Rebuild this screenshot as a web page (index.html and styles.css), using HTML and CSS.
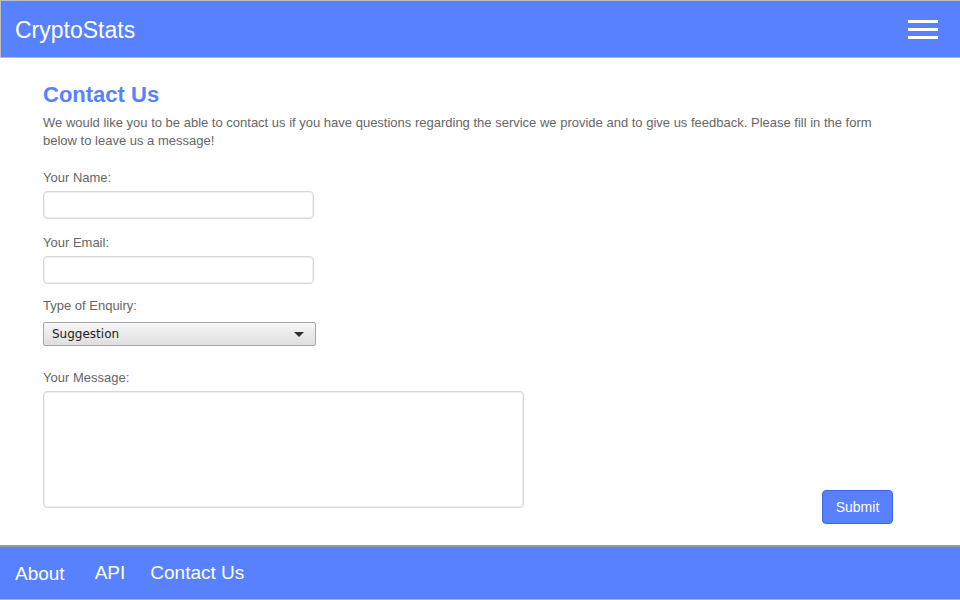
FILE: index.html
```html
<!DOCTYPE html>
<html lang="en">
<head>
<meta charset="utf-8">
<title>CryptoStats - Contact Us</title>
<link rel="stylesheet" href="styles.css">
</head>
<body>
<header class="topbar">
  <div class="brand">CryptoStats</div>
  <button class="menu" aria-label="Menu">
    <span class="bar"></span><span class="bar"></span><span class="bar"></span>
  </button>
</header>
<main class="content">
  <h1 class="title">Contact Us</h1>
  <p class="intro">We would like you to be able to contact us if you have questions regarding the service we provide and to give us feedback. Please fill in the form below to leave us a message!</p>
  <form class="form">
    <label class="label label-name">Your Name:</label>
    <input class="field" type="text">
    <label class="label label-email">Your Email:</label>
    <input class="field" type="email">
    <label class="label label-type">Type of Enquiry:</label>
    <div class="select-wrap">
      <select class="select">
        <option>Suggestion</option>
        <option>Question</option>
        <option>Bug Report</option>
      </select>
    </div>
    <div class="message-row">
      <div class="message-group">
        <label class="label label-msg">Your Message:</label>
        <textarea class="area"></textarea>
      </div>
      <button class="submit" type="button">Submit</button>
    </div>
  </form>
</main>
<footer class="footer">
  <a class="flink flink-about" href="#">About</a>
  <a class="flink flink-api" href="#">API</a>
  <a class="flink flink-contact" href="#">Contact Us</a>
</footer>
</body>
</html>
```
FILE: styles.css
```css
html, body {
  margin: 0;
  padding: 0;
  width: 960px;
  height: 600px;
  overflow: hidden;
  background: #fff;
  font-family: "Liberation Sans", Arial, sans-serif;
}

.topbar {
  box-sizing: border-box;
  height: 58px;
  background: #5781fe;
  border-top: 1px solid #bdbdbd;
  border-left: 1px solid #bdbdbd;
  border-bottom: 1px solid #bdbdbd;
  display: flex;
  align-items: center;
  justify-content: space-between;
  padding: 0 22px 0 14px;
}

.brand {
  color: #fff;
  font-size: 23px;
  line-height: 26px;
  margin-top: 2px;
}

.menu {
  background: none;
  border: 0;
  padding: 0;
  width: 30px;
  display: flex;
  flex-direction: column;
  gap: 5px;
  margin-top: 1px;
}

.bar {
  display: block;
  width: 30px;
  height: 3px;
  background: #fff;
}

.content {
  box-sizing: border-box;
  height: 487px;
  padding: 24px 67px 0 43px;
}

.title {
  margin: 0;
  color: #5781fe;
  font-size: 22px;
  line-height: 25px;
  font-weight: bold;
}

.intro {
  margin: 7px 0 0;
  color: #666;
  font-size: 13px;
  line-height: 18px;
}

.form {
  display: flex;
  flex-direction: column;
  align-items: flex-start;
}

.label {
  display: block;
  color: #666;
  font-size: 13px;
  line-height: 15px;
}

.label-name { margin-top: 20px; margin-bottom: 6px; }
.label-email { margin-top: 16px; margin-bottom: 6px; }
.label-type { margin-top: 14px; margin-bottom: 9px; }
.label-msg { margin-top: 24px; margin-bottom: 6px; }

.field {
  box-sizing: border-box;
  width: 271px;
  height: 28px;
  margin: 0;
  border: 1px solid #d8d8d8;
  box-shadow: inset 0 0 0 1px #efefef;
  border-radius: 4px;
  background: #fff;
  outline: none;
}

.select-wrap {
  position: relative;
  width: 273px;
  height: 24px;
}

.select-wrap::after {
  content: "";
  position: absolute;
  right: 12px;
  top: 10px;
  width: 0;
  height: 0;
  border-left: 5px solid transparent;
  border-right: 5px solid transparent;
  border-top: 5px solid #2e2e2e;
  pointer-events: none;
}

.select {
  -webkit-appearance: none;
  appearance: none;
  box-sizing: border-box;
  width: 273px;
  height: 24px;
  margin: 0;
  padding: 0 0 0 8px;
  border: 1px solid #a6a6a6;
  border-radius: 2px;
  background: linear-gradient(#f6f6f6, #dedede);
  color: #222;
  font-family: "DejaVu Sans", sans-serif;
  font-size: 12px;
  line-height: 22px;
}

.message-row {
  align-self: stretch;
  display: flex;
  justify-content: space-between;
  align-items: flex-end;
}

.message-group {
  display: flex;
  flex-direction: column;
}

.area {
  box-sizing: border-box;
  width: 481px;
  height: 117px;
  margin: 0;
  border: 1px solid #d8d8d8;
  box-shadow: inset 0 0 0 1px #efefef;
  border-radius: 4px;
  resize: none;
  outline: none;
}

.submit {
  box-sizing: border-box;
  width: 71px;
  height: 34px;
  margin: 0 0 -16px;
  border: 1px solid #3d67e6;
  border-radius: 4px;
  background: #5781fe;
  color: #fff;
  font-family: "Liberation Sans", Arial, sans-serif;
  font-size: 14px;
  padding: 0;
}

.footer {
  box-sizing: border-box;
  height: 55px;
  background: #5781fe;
  border-top: 2px solid #999;
  border-bottom: 1px solid #aab8e6;
  display: flex;
  align-items: flex-start;
  padding-left: 15px;
}

.flink {
  color: #fff;
  text-decoration: none;
  font-size: 19px;
  line-height: 22px;
}

.flink-about { margin-top: 16px; margin-right: 30px; }
.flink-api { margin-top: 15px; margin-right: 25px; }
.flink-contact { margin-top: 15px; }
```
